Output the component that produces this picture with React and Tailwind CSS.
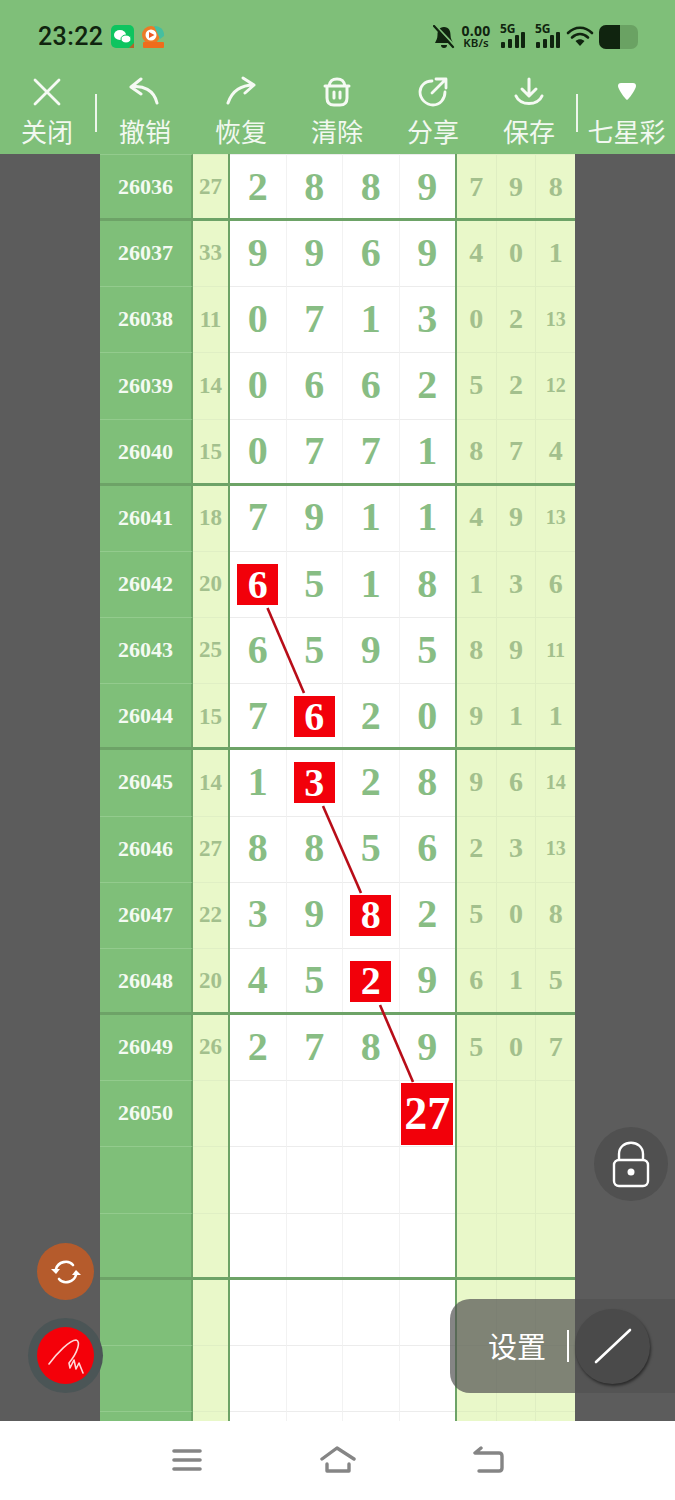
import React from "react";

const rows = [
  ["26036", "27", "2889", ["7", "9", "8"]],
  ["26037", "33", "9969", ["4", "0", "1"]],
  ["26038", "11", "0713", ["0", "2", "13"]],
  ["26039", "14", "0662", ["5", "2", "12"]],
  ["26040", "15", "0771", ["8", "7", "4"]],
  ["26041", "18", "7911", ["4", "9", "13"]],
  ["26042", "20", "6518", ["1", "3", "6"], 0],
  ["26043", "25", "6595", ["8", "9", "11"]],
  ["26044", "15", "7620", ["9", "1", "1"], 1],
  ["26045", "14", "1328", ["9", "6", "14"], 1],
  ["26046", "27", "8856", ["2", "3", "13"]],
  ["26047", "22", "3982", ["5", "0", "8"], 2],
  ["26048", "20", "4529", ["6", "1", "5"], 2],
  ["26049", "26", "2789", ["5", "0", "7"]],
  ["26050", "", "", ["", "", ""], 3, "27"],
  ["", "", "", ["", "", ""]],
  ["", "", "", ["", "", ""]],
  ["", "", "", ["", "", ""]],
  ["", "", "", ["", "", ""]],
  ["", "", "", ["", "", ""]],
];

function Row({ r, i }) {
  const heavy = i % 4 === 0;
  const [id, sum, digits, right, red, redText] = r;
  const chars = redText ? ["", "", "", redText] : digits.split("");
  return (
    <div className="flex h-[66.17px] shrink-0 relative">
      <div className="w-[93px] shrink-0 flex items-center justify-center bg-[#7fbf79] border-r-2 border-r-[#6da367] text-[#f4faf2] text-[22px] font-bold border-t border-t-[#93cb8d] pb-[2px]">
        {id}
      </div>
      <div className="w-[35px] shrink-0 flex items-center justify-center bg-[#e9f8c9] text-[#a3c08d] text-[23px] font-bold border-t border-t-[#e0efc4]">
        {sum}
      </div>
      <div className="w-[229px] shrink-0 flex bg-white border-x-2 border-x-[#6da367]">
        {[0, 1, 2, 3].map((c) => (
          <div key={c} className="flex-1 flex items-center justify-center text-[#88bd84] text-[40px] font-bold border-r border-r-[#f2f2f2] border-t border-t-[#ececec] last:border-r-0">
            {red === c ? (
              <span className={redText ? "w-[52px] h-[62px] bg-[#f2000a] text-white text-[46px] flex items-center justify-center font-bold" : "w-[41px] h-[41px] bg-[#f2000a] text-white flex items-center justify-center"}>
                {chars[c]}
              </span>
            ) : (
              <span className="mb-[2px]">{chars[c]}</span>
            )}
          </div>
        ))}
      </div>
      <div className="flex-1 flex bg-[#e9f8c9]">
        {right.map((v, c) => (
          <div key={c} className={`flex-1 flex items-center justify-center text-[#a3c08d] font-bold border-r border-r-[#dfeec2] border-t border-t-[#dfeec2] last:border-r-0 pb-[2px] ${v.length > 1 ? "text-[20px]" : "text-[28px]"}`}>
            {v}
          </div>
        ))}
      </div>
      {heavy && <div className="absolute left-0 right-0 bottom-[-1px] h-[3px] bg-[#6da367] z-10" />}
    </div>
  );
}

function ToolItem({ label, children }) {
  return (
    <div className="w-[96px] shrink-0 flex flex-col items-center">
      <div className="h-[40px] flex items-center justify-center">{children}</div>
      <span className="text-[26px] leading-[38px] text-[#f2f8f0]">{label}</span>
    </div>
  );
}

const iconProps = { fill: "none", stroke: "#f6faf4", strokeLinecap: "round", strokeLinejoin: "round" };

function Signal() {
  return (
    <div className="relative w-[26px] h-[24px]">
      <span className="absolute left-0 top-[-3px] text-[12px] font-bold leading-[14px] text-[#10240f]" style={{ fontFamily: '"Noto Sans", sans-serif' }}>5G</span>
      <svg width="26" height="24" viewBox="0 0 26 24" className="absolute left-0 top-0">
        <rect x="1" y="17" width="4" height="6" rx="1" fill="#10240f" />
        <rect x="8" y="14" width="4" height="9" rx="1" fill="#10240f" />
        <rect x="15" y="10" width="4" height="13" rx="1" fill="#10240f" />
        <rect x="21" y="7" width="4" height="16" rx="1" fill="#10240f" />
      </svg>
    </div>
  );
}

export default function App() {
  return (
    <div className="w-[675px] h-[1500px] flex flex-col overflow-hidden relative bg-white" style={{ fontFamily: '"Noto Sans CJK SC", sans-serif' }}>
      <div className="h-[154px] shrink-0 bg-[#7fbf79] flex flex-col">
        <div className="h-[72px] flex items-center pl-[38px] pr-[37px] pt-[1px]">
          <span className="text-[25px] font-medium text-[#10240f] tracking-[0.4px]" style={{ fontFamily: "Roboto, sans-serif" }}>23:22</span>
          <svg width="24" height="24" viewBox="0 0 24 24" className="ml-[8px]">
            <rect width="23" height="23" rx="5" fill="#0ec45f" />
            <ellipse cx="9" cy="10" rx="6" ry="5" fill="#fff" />
            <ellipse cx="15" cy="14" rx="5" ry="4" fill="#fff" stroke="#0ec45f" />
            <path d="M18 23 L23 18 V23Z" fill="#b5632a" />
          </svg>
          <svg width="25" height="24" viewBox="0 0 25 24" className="ml-[5px]">
            <circle cx="11" cy="10" r="9" fill="#ed7a26" />
            <path d="M14 1 A9 9 0 0 1 24 11 L20 14 Z" fill="#45bfa0" />
            <circle cx="11" cy="10" r="5.5" fill="#fff" />
            <path d="M9 7 L14.5 10 L9 13Z" fill="#ed5a26" />
            <rect x="3" y="17" width="21" height="6" rx="1" fill="#ef6c1c" />
          </svg>
          <div className="flex-1" />
          <svg width="22" height="24" viewBox="0 0 22 24">
            <path d="M11 2 C6 2 4.5 6 4.5 10 C4.5 14 3 15.5 2 18 H20 C19 15.5 17.5 14 17.5 10 C17.5 6 16 2 11 2Z" fill="#10240f" />
            <path d="M8 20 A3 3 0 0 0 14 20Z" fill="#10240f" />
            <path d="M3 1 L22 21" stroke="#7fbf79" strokeWidth="2" />
            <path d="M1 1 L20 22" stroke="#10240f" strokeWidth="2.2" strokeLinecap="round" />
          </svg>
          <div className="ml-[6px] w-[30px] flex flex-col items-center text-[#10240f] font-bold" style={{ fontFamily: '"Noto Sans", sans-serif' }}>
            <span className="text-[14px] leading-[13px] tracking-[0.2px]">0.00</span>
            <span className="text-[11.5px] leading-[12px] font-semibold">KB/s</span>
          </div>
          <div className="ml-[9px]"><Signal /></div>
          <div className="ml-[9px]"><Signal /></div>
          <svg width="28" height="24" viewBox="0 0 28 24" className="ml-[5px]">
            <path d="M2 8 C9 1 19 1 26 8" fill="none" stroke="#10240f" strokeWidth="2.6" strokeLinecap="round" />
            <path d="M6 12.5 C11 8 17 8 22 12.5" fill="none" stroke="#10240f" strokeWidth="2.6" strokeLinecap="round" />
            <path d="M9.5 16 C12.5 13.5 15.5 13.5 18.5 16 L14 21Z" fill="#10240f" />
          </svg>
          <div className="ml-[5px] w-[39px] h-[24px] rounded-[7px] bg-[#6aa263] overflow-hidden">
            <div className="w-[21px] h-full bg-[#10240f]" />
          </div>
        </div>
        <div className="flex-1 flex relative -ml-[1px]">
          <ToolItem label="关闭">
            <svg width="30" height="30" viewBox="0 0 30 30" {...iconProps} strokeWidth="2.8"><path d="M3 3 L27 27 M27 3 L3 27" /></svg>
          </ToolItem>
          <div className="w-[2px] h-[38px] mt-[22px] bg-[#eef6ec] shrink-0" />
          <ToolItem label="撤销">
            <svg width="32" height="32" viewBox="0 0 32 32" {...iconProps} strokeWidth="3"><path d="M12 3 L2 11 L12 18 M2 11 C14 9 25 14 28 27" /></svg>
          </ToolItem>
          <ToolItem label="恢复">
            <svg width="32" height="32" viewBox="0 0 32 32" {...iconProps} strokeWidth="3"><path d="M18 2 L29 9 L20 17 M29 9 C16 9 7 15 3 27" /></svg>
          </ToolItem>
          <ToolItem label="清除">
            <svg width="28" height="30" viewBox="0 0 28 30" {...iconProps} strokeWidth="3"><path d="M2 9 H26 M6 9 C7 3 10 2 14 2 C18 2 21 3 22 9 M4 9 V21 C4 26 7 28 11 28 H17 C21 28 24 26 24 21 V9 M11 15 V21 M17 15 V21" /></svg>
          </ToolItem>
          <ToolItem label="分享">
            <svg width="30" height="30" viewBox="0 0 30 30" {...iconProps} strokeWidth="2.8"><path d="M14 4 C6 4 2 10 2 15 C2 22 8 28 15 28 C22 28 27 22 27 15 M18 2 H28 V11 M28 2 L14 16" /></svg>
          </ToolItem>
          <ToolItem label="保存">
            <svg width="30" height="30" viewBox="0 0 30 30" {...iconProps} strokeWidth="3"><path d="M15 2 V18 M8 12 L15 19 L22 12 M2 19 C6 29 24 29 28 19" /></svg>
          </ToolItem>
          <div className="w-[2px] h-[38px] mt-[22px] bg-[#eef6ec] shrink-0 -ml-[1px]" />
          <div className="flex-1 flex flex-col items-center">
            <div className="h-[40px] flex items-center justify-center">
              <svg width="20" height="18" viewBox="0 0 20 18"><path d="M1 3 C1 1 2 0 4 0 H16 C18 0 19 1 19 3 C19 6 12 16 10 17 C8 16 1 6 1 3Z" fill="#ffffff" /></svg>
            </div>
            <span className="text-[26px] leading-[38px] text-[#f2f8f0] whitespace-nowrap">七星彩</span>
          </div>
        </div>
      </div>

      <div className="h-[1267px] shrink-0 bg-[#5c5c5c] flex justify-center overflow-hidden relative">
        <div className="w-[475px] flex flex-col" style={{ fontFamily: '"Liberation Serif", serif' }}>
          {rows.map((r, i) => <Row key={i} r={r} i={i} />)}
        </div>
        <svg width="675" height="1267" viewBox="0 0 675 1267" className="absolute left-0 top-0 pointer-events-none z-20">
          <g stroke="#b80d18" strokeWidth="2.6">
            <path d="M267.5 454 L304 539" />
            <path d="M323 652 L361 739" />
            <path d="M380 851 L413 928" />
          </g>
        </svg>
      </div>

      <div className="flex-1 bg-white relative">
        <svg width="30" height="24" viewBox="0 0 30 24" className="absolute left-[172px] top-[27px]" fill="none" stroke="#858585" strokeWidth="3.6" strokeLinecap="round">
          <path d="M2 3 H28 M2 12 H28 M2 21 H28" />
        </svg>
        <svg width="36" height="28" viewBox="0 0 36 28" className="absolute left-[320px] top-[25px]" fill="none" stroke="#858585" strokeWidth="3.4" strokeLinecap="round" strokeLinejoin="round">
          <path d="M2 13 L17 2 L34 13 M7 18 V25 H29 V18" />
        </svg>
        <svg width="32" height="28" viewBox="0 0 32 28" className="absolute left-[473px] top-[25px]" fill="none" stroke="#858585" strokeWidth="3.4" strokeLinecap="round" strokeLinejoin="round">
          <path d="M8 2 L2 7 L26 7 C28 7 29 8 29 10 V22 C29 24 28 25 26 25 H6" />
        </svg>
      </div>

      {/* floating controls */}
      <div className="absolute left-[37px] top-[1243px] w-[57px] h-[57px] rounded-full bg-[#b55b2c] flex items-center justify-center z-30">
        <svg width="30" height="26" viewBox="0 0 30 26" fill="none" stroke="#fff" strokeWidth="2.6" strokeLinecap="round">
          <path d="M5 10 C7 3 17 0 22 6" />
          <path d="M25 16 C23 23 13 26 8 20" />
          <path d="M0 10 L9 10 L5 15Z" fill="#fff" stroke="none" />
          <path d="M21 16 L30 16 L25 11Z" fill="#fff" stroke="none" />
        </svg>
      </div>
      <div className="absolute left-[28px] top-[1318px] w-[75px] h-[75px] rounded-full bg-[#4b5556] flex items-center justify-center z-30">
        <div className="w-[57px] h-[57px] rounded-full bg-[#f40009] flex items-center justify-center">
          <svg width="36" height="36" viewBox="0 0 36 36" fill="none" stroke="#ffd6d6" strokeWidth="1.6" strokeLinecap="round" strokeLinejoin="round">
            <path d="M1 26 C9 15 22 2 28 2 C33 3 30 14 21 25 L22 30 L26 22 L28 31 L31 25 L35 35" />
          </svg>
        </div>
      </div>

      <div className="absolute left-[594px] top-[1127px] w-[74px] h-[74px] rounded-full bg-[#505050] flex items-center justify-center z-30">
        <svg width="38" height="48" viewBox="0 0 38 48" fill="none" stroke="#fff" strokeWidth="2.4">
          <path d="M7 20 V14 C7 -1 31 -1 31 14 V20" />
          <rect x="2" y="20" width="34" height="26" rx="5" />
          <circle cx="19" cy="32" r="3.5" fill="#fff" stroke="none" />
        </svg>
      </div>

      <div className="absolute left-[450px] top-[1299px] w-[225px] h-[94px] rounded-l-[20px] bg-[#515151]/70 flex items-center z-30">
        <span className="ml-[38px] text-[29px] text-white">设置</span>
        <div className="ml-[21px] w-[2px] h-[32px] bg-white" />
        <div className="ml-[6px] w-[75px] h-[75px] rounded-full bg-[#4a4a4a] shadow-[1px_2px_3px_rgba(0,0,0,0.5)] flex items-center justify-center">
          <svg width="38" height="36" viewBox="0 0 38 36" fill="none" stroke="#fff" strokeWidth="2.6" strokeLinecap="round">
            <path d="M2 34 L36 2" />
          </svg>
        </div>
      </div>
    </div>
  );
}
